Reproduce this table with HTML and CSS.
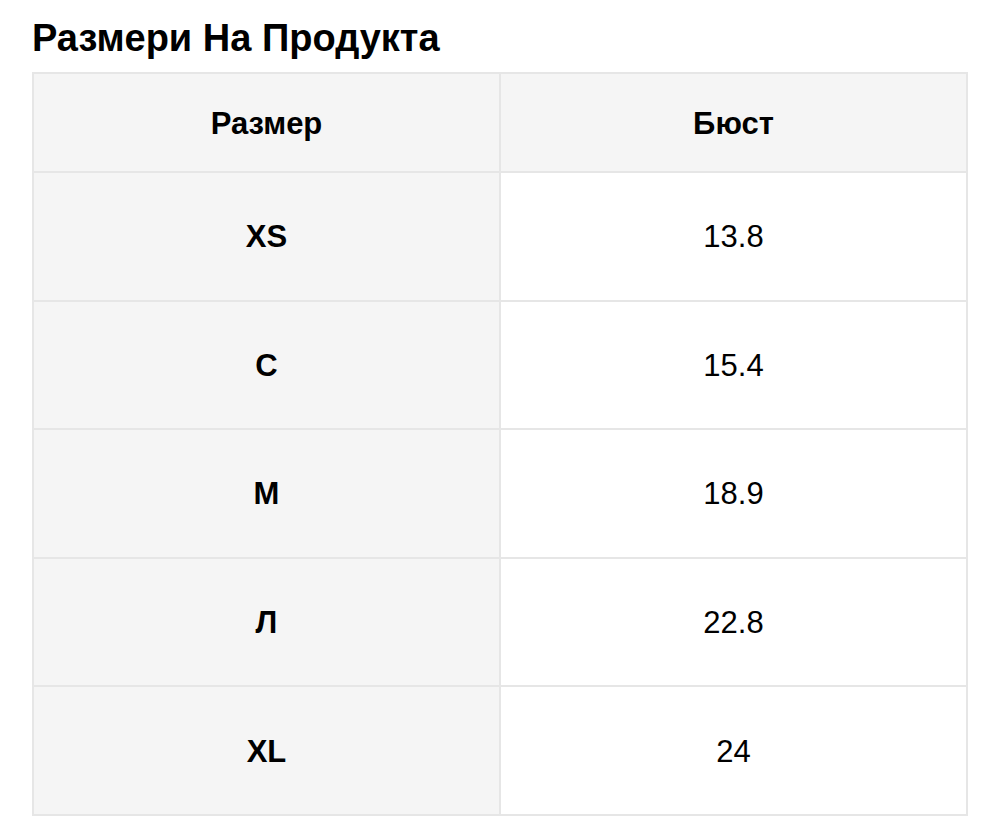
FILE: index.html
```html
<!DOCTYPE html>
<html lang="bg">
<head>
<meta charset="utf-8">
<title>Размери На Продукта</title>
<link rel="stylesheet" href="styles.css">
</head>
<body>
<div class="page">
  <h1 class="title">Размери На Продукта</h1>
  <table class="size-table">
    <thead>
      <tr>
        <th class="head">Размер</th>
        <th class="head">Бюст</th>
      </tr>
    </thead>
    <tbody>
      <tr><td class="size">XS</td><td class="value">13.8</td></tr>
      <tr><td class="size">С</td><td class="value">15.4</td></tr>
      <tr><td class="size">M</td><td class="value">18.9</td></tr>
      <tr><td class="size">Л</td><td class="value">22.8</td></tr>
      <tr><td class="size">XL</td><td class="value">24</td></tr>
    </tbody>
  </table>
</div>
</body>
</html>
```

FILE: styles.css
```css
html, body {
  margin: 0;
  padding: 0;
  background: #ffffff;
}

body {
  font-family: "Liberation Sans", Arial, Helvetica, sans-serif;
  color: #000000;
}

.page {
  padding: 16px 32px 0 32px;
}

.title {
  margin: 0 0 12px 0;
  font-size: 38px;
  line-height: 44px;
  font-weight: bold;
}

.size-table {
  width: 936px;
  table-layout: fixed;
  border-collapse: separate;
  border-spacing: 2px;
  background: #e6e6e6;
}

.size-table th,
.size-table td {
  width: 50%;
  padding: 2px 0 0 0;
  text-align: center;
  vertical-align: middle;
  font-size: 31px;
}

.head {
  height: 95px;
  background: #f5f5f5;
  font-weight: bold;
}

.size {
  height: 124.6px;
  background: #f5f5f5;
  font-weight: bold;
}

.value {
  height: 124.6px;
  background: #ffffff;
  font-weight: normal;
}
```
